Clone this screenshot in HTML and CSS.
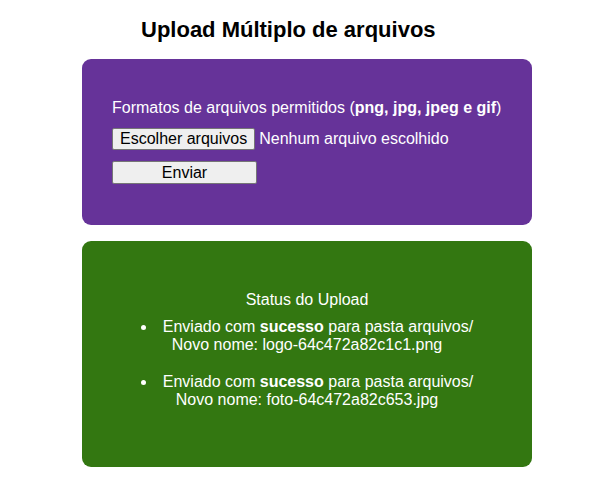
FILE: index.html
```html
<!DOCTYPE html>
<html lang="pt-BR">
<head>
<meta charset="utf-8">
<title>Upload Múltiplo de arquivos</title>
<link rel="stylesheet" href="styles.css">
</head>
<body>
<main class="container">
  <h1 class="title">Upload Múltiplo de arquivos</h1>
  <form class="card card-upload">
    <p class="formats">Formatos de arquivos permitidos (<strong>png, jpg, jpeg e gif</strong>)</p>
    <div class="file-row">
      <button type="button" class="btn btn-file">Escolher arquivos</button>
      <span class="file-name">Nenhum arquivo escolhido</span>
    </div>
    <button type="button" class="btn btn-send">Enviar</button>
  </form>
  <section class="card card-status">
    <p class="status-title">Status do Upload</p>
    <ul class="status-list">
      <li>Enviado com <strong>sucesso</strong> para pasta arquivos/<br>Novo nome: logo-64c472a82c1c1.png</li>
      <li>Enviado com <strong>sucesso</strong> para pasta arquivos/<br>Novo nome: foto-64c472a82c653.jpg</li>
    </ul>
  </section>
</main>
</body>
</html>
```
FILE: styles.css
```css
html, body {
  margin: 0;
  padding: 0;
  background: #ffffff;
}
body {
  font-family: "Liberation Sans", Arial, sans-serif;
  font-size: 16px;
  color: #000;
}
.container {
  width: 450px;
  margin-left: 82px;
  padding-top: 17px;
  display: flex;
  flex-direction: column;
}
.title {
  margin: 0 0 17px 59px;
  font-size: 22px;
  font-weight: bold;
  line-height: 25px;
}
.card {
  border-radius: 9px;
  color: #fff;
}
.card-upload {
  background: #663399;
  padding: 40px 30px 41px;
  display: flex;
  flex-direction: column;
  align-items: flex-start;
}
.formats {
  margin: 0 0 11px;
  line-height: 18px;
}
.file-row {
  display: flex;
  align-items: center;
  gap: 4px;
}
.btn {
  font-family: "Liberation Sans", Arial, sans-serif;
  font-size: 16px;
  line-height: 18px;
  color: #000;
  background: #efefef;
  border: 1px solid #767676;
  border-radius: 2px;
  padding: 1px 6px;
  margin: 0;
}
.btn-file {
  height: 22px;
  padding: 1px 7px;
}
.file-name {
  line-height: 18px;
}
.btn-send {
  margin-top: 11px;
  width: 145px;
  height: 23px;
}
.card-status {
  margin-top: 16px;
  background: #337711;
  padding: 50px 30px 58px;
  text-align: center;
}
.status-title {
  margin: 0 0 9px;
  line-height: 18px;
}
.status-list {
  margin: 0;
  padding: 0;
  list-style: disc inside;
  line-height: 18px;
}
.status-list li + li {
  margin-top: 19px;
}
```
